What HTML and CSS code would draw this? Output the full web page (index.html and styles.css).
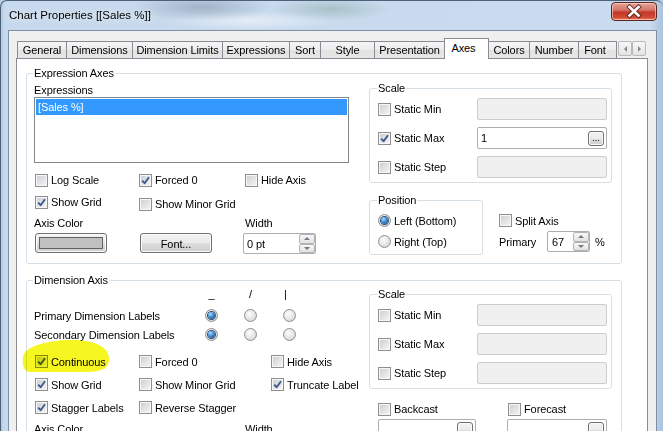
FILE: index.html
```html
<!DOCTYPE html>
<html lang="en">
<head>
<meta charset="utf-8">
<title>Chart Properties</title>
<link rel="stylesheet" href="styles.css">
</head>
<body>
<div class="window">
  <div class="titlebar">
    <span class="title">Chart Properties [[Sales %]]</span>
    <span class="close"><svg width="46" height="19" viewBox="0 0 46 19"><path class="x-shadow" d="M18.5 5L27.5 13.5M27.5 5L18.5 13.5"/><path class="x-mark" d="M18.5 5L27.5 13.5M27.5 5L18.5 13.5"/></svg></span>
  </div>
  <div class="client">
    <div class="tabs">
      <span class="tab t-general">General</span>
      <span class="tab t-dim">Dimensions</span>
      <span class="tab t-diml">Dimension Limits</span>
      <span class="tab t-expr">Expressions</span>
      <span class="tab t-sort">Sort</span>
      <span class="tab t-style">Style</span>
      <span class="tab t-pres">Presentation</span>
      <span class="tab t-axes active">Axes</span>
      <span class="tab t-colors">Colors</span>
      <span class="tab t-number">Number</span>
      <span class="tab t-font">Font</span>
      <span class="tab-arrows"><span class="arrow arrow-left"></span><span class="arrow arrow-right"></span></span>
    </div>
    <div class="panel">
      <fieldset class="group g-expr">
        <legend>Expression Axes</legend>
        <div class="cols">
          <div class="lcol">
            <div class="lbl-top">Expressions</div>
            <div class="listbox"><div class="lb-sel">[Sales %]</div></div>
            <div class="crow crow-a">
              <label class="chk w104"><span class="cb"></span>Log Scale</label>
              <label class="chk w106"><span class="cb on"><svg viewBox="0 0 11 11"><path d="M2.2 5.6L4.6 8.2L9 2.3"/></svg></span>Forced 0</label>
              <label class="chk"><span class="cb"></span>Hide Axis</label>
            </div>
            <div class="crow crow-b">
              <label class="chk w104"><span class="cb on"><svg viewBox="0 0 11 11"><path d="M2.2 5.6L4.6 8.2L9 2.3"/></svg></span>Show Grid</label>
              <label class="chk low"><span class="cb"></span>Show Minor Grid</label>
            </div>
            <div class="lrow">
              <span class="w211">Axis Color</span><span>Width</span>
            </div>
            <div class="brow">
              <span class="btn colorbtn"><span class="swatch"></span></span>
              <span class="btn fontbtn">Font...</span>
              <span class="field spinfield wfield">
                <span class="val">0 pt</span>
                <span class="spin"><span class="sb up"></span><span class="sb down"></span></span>
              </span>
            </div>
          </div>
          <div class="rcol">
            <fieldset class="group scale scale-a">
              <legend>Scale</legend>
              <div class="srow"><label class="chk w99"><span class="cb"></span>Static Min</label><span class="field dis sfield"></span></div>
              <div class="srow"><label class="chk w99"><span class="cb on"><svg viewBox="0 0 11 11"><path d="M2.2 5.6L4.6 8.2L9 2.3"/></svg></span>Static Max</label><span class="field sfield"><span class="val">1</span><span class="btn dots">...</span></span></div>
              <div class="srow"><label class="chk w99"><span class="cb"></span>Static Step</label><span class="field dis sfield"></span></div>
            </fieldset>
            <div class="posrow">
              <fieldset class="group pos">
                <legend>Position</legend>
                <label class="opt"><span class="rb on"></span>Left (Bottom)</label>
                <label class="opt"><span class="rb"></span>Right (Top)</label>
              </fieldset>
              <div class="split">
                <label class="chk h21"><span class="cb"></span>Split Axis</label>
                <div class="prim">
                  <span class="w48">Primary</span>
                  <span class="field spinfield pfield">
                    <span class="val">67</span>
                    <span class="spin"><span class="sb up"></span><span class="sb down"></span></span>
                  </span>
                  <span class="pct">%</span>
                </div>
              </div>
            </div>
          </div>
        </div>
      </fieldset>

      <fieldset class="group g-dim">
        <legend>Dimension Axis</legend>
        <div class="cols">
          <div class="lcol">
            <div class="hdr"><span class="hc">_</span><span class="hc hc2">/</span><span class="hc hc3">|</span></div>
            <div class="rrow rrow-first"><span class="rlabel">Primary Dimension Labels</span><span class="rb on"></span><span class="rb rb-gap"></span><span class="rb rb-gap"></span></div>
            <div class="rrow"><span class="rlabel">Secondary Dimension Labels</span><span class="rb on"></span><span class="rb rb-gap"></span><span class="rb rb-gap"></span></div>
            <div class="drow drow-first">
              <label class="chk w104"><span class="cb on"><svg viewBox="0 0 11 11"><path d="M2.2 5.6L4.6 8.2L9 2.3"/></svg></span>Continuous</label>
              <label class="chk w132"><span class="cb"></span>Forced 0</label>
              <label class="chk"><span class="cb"></span>Hide Axis</label>
            </div>
            <div class="drow">
              <label class="chk w104"><span class="cb on"><svg viewBox="0 0 11 11"><path d="M2.2 5.6L4.6 8.2L9 2.3"/></svg></span>Show Grid</label>
              <label class="chk w132"><span class="cb"></span>Show Minor Grid</label>
              <label class="chk"><span class="cb on"><svg viewBox="0 0 11 11"><path d="M2.2 5.6L4.6 8.2L9 2.3"/></svg></span>Truncate Label</label>
            </div>
            <div class="drow">
              <label class="chk w104"><span class="cb on"><svg viewBox="0 0 11 11"><path d="M2.2 5.6L4.6 8.2L9 2.3"/></svg></span>Stagger Labels</label>
              <label class="chk w132"><span class="cb"></span>Reverse Stagger</label>
            </div>
            <div class="lrow lrow-dim">
              <span class="w211">Axis Color</span><span>Width</span>
            </div>
          </div>
          <div class="rcol">
            <fieldset class="group scale scale-b">
              <legend>Scale</legend>
              <div class="srow"><label class="chk w99"><span class="cb"></span>Static Min</label><span class="field dis sfield"></span></div>
              <div class="srow"><label class="chk w99"><span class="cb"></span>Static Max</label><span class="field dis sfield"></span></div>
              <div class="srow"><label class="chk w99"><span class="cb"></span>Static Step</label><span class="field dis sfield"></span></div>
            </fieldset>
            <div class="castrow">
              <label class="chk w130"><span class="cb"></span>Backcast</label>
              <label class="chk"><span class="cb"></span>Forecast</label>
            </div>
            <div class="castfields">
              <span class="field cfield1"><span class="btn dots"></span></span>
              <span class="field cfield2"><span class="btn dots"></span></span>
            </div>
          </div>
        </div>
      </fieldset>
    </div>
  </div>
</div>
<svg class="highlight" width="663" height="431" viewBox="0 0 663 431"><path d="M23 357C24 346 50 339 76 340C97 341 110 348 109 360C108 370 100 372 82 372L31 372C24 372 22 366 23 357Z"/></svg>
</body>
</html>
```
FILE: styles.css
```css
* { box-sizing: border-box; }
html, body { margin: 0; padding: 0; }
body {
  position: relative;
  width: 663px;
  height: 431px;
  overflow: hidden;
  background: #b8cde4;
  font-family: "Liberation Sans", Arial, sans-serif;
  font-size: 11px;
  line-height: 14px;
  letter-spacing: -0.1px;
  color: #000;
}
.window {
  height: 431px;
  display: flex;
  flex-direction: column;
  border-left: 1px solid #4d6179;
  border-top: 1px solid #4d6179;
  border-radius: 7px 7px 0 0;
  background:
    radial-gradient(ellipse 70px 14px at 200px 6px, rgba(90,110,130,.35), rgba(90,110,130,0)),
    radial-gradient(ellipse 60px 12px at 330px 8px, rgba(80,120,90,.25), rgba(80,120,90,0)),
    radial-gradient(ellipse 90px 10px at 250px 20px, rgba(255,255,255,.5), rgba(255,255,255,0)),
    linear-gradient(90deg, #aec6df 0, #c7d9ed 3px, #c9dbee 98%, #aac3de 100%);
}
.titlebar {
  height: 29px;
  display: flex;
  justify-content: space-between;
  align-items: flex-start;
  flex: none;
}
.title {
  padding: 7px 0 0 8px;
  font-size: 11.5px;
  letter-spacing: 0;
  color: #000;
  text-shadow: 0 0 6px rgba(255,255,255,.9);
}
.close {
  margin: 1px 6px 0 0;
  width: 46px;
  height: 19px;
  border: 1px solid #5e2621;
  border-radius: 4px;
  background: linear-gradient(#e6a399 0, #d6776a 40%, #c2382a 55%, #d24b35 85%, #e38a6f 100%);
  box-shadow: inset 0 0 0 1px rgba(255,220,210,.6);
}
.close svg { display: block; margin: -1px 0 0 -1px; }
.x-shadow { stroke: #4a1d17; stroke-width: 4.6; stroke-linecap: square; fill: none; opacity: .75; }
.x-mark { stroke: #fff; stroke-width: 2.6; stroke-linecap: square; fill: none; }

.client {
  flex: 1;
  display: flex;
  flex-direction: column;
  margin: 0 6px 0 7px;
  border: 1px solid #7f90a5;
  border-bottom: none;
  background: #f0f0f0;
  padding: 7px 8px 0 7px;
}
.tabs {
  display: flex;
  align-items: flex-end;
  height: 20px;
  margin-left: 1px;
  flex: none;
}
.tab {
  height: 17px;
  margin-right: -1px;
  display: flex;
  align-items: center;
  justify-content: center;
  border: 1px solid #898c95;
  border-bottom: none;
  background: linear-gradient(#f5f5f5 0, #ededed 50%, #e2e2e2 51%, #e6e6e6 100%);
  white-space: nowrap;
  flex: none;
}
.tab.active {
  position: relative;
  z-index: 2;
  height: 21px;
  margin-bottom: -1px;
  padding: 0 6px 3px 0;
  background: #fff;
}
.t-general { width: 50px; }
.t-dim { width: 67px; }
.t-diml { width: 91px; }
.t-expr { width: 68px; }
.t-sort { width: 32px; }
.t-style { width: 55px; }
.t-pres { width: 71px; }
.t-axes { width: 45px; }
.t-colors { width: 42px; }
.t-number { width: 50px; }
.t-font { width: 39px; padding-right: 5px; }
.tab-arrows {
  display: flex;
  margin: 0 0 2px 2px;
}
.arrow {
  width: 14px;
  height: 15px;
  border: 1px solid #b9b9b9;
  border-radius: 2px;
  background: linear-gradient(#f7f7f7, #e4e4e4);
  display: flex;
  align-items: center;
  justify-content: center;
}
.arrow::after {
  content: "";
  width: 0;
  height: 0;
  border-top: 3px solid transparent;
  border-bottom: 3px solid transparent;
}
.arrow-left::after { border-right: 3px solid #8a8a8a; }
.arrow-right::after { border-left: 3px solid #8a8a8a; }

.panel {
  flex: 1;
  background: #fff;
  border: 1px solid #898c95;
  padding: 7px 0 0 9px;
}

/* group boxes */
.group {
  margin: 0;
  min-width: 0;
  border: 1px solid #d5dfe5;
  border-radius: 3px;
}
.group legend {
  padding: 0 1px;
  margin-left: -1px;
  line-height: 14px;
}
.g-expr { width: 596px; padding: 0 9px 8px 7px; }
.g-dim { width: 596px; margin-top: 9px; padding: 0 9px 20px 7px; }
.cols { display: flex; align-items: flex-start; }
.lcol { width: 335px; flex: none; }
.rcol { width: 243px; flex: none; }

/* expression axes left */
.lbl-top { margin-top: 3px; height: 14px; }
.listbox {
  width: 315px;
  height: 66px;
  border: 1px solid #828790;
  padding: 1px;
}
.lb-sel {
  height: 16px;
  line-height: 16px;
  padding-left: 2px;
  background: #3399ff;
  color: #fff;
}
.crow { display: flex; align-items: flex-start; height: 18px; margin-left: 1px; }
.crow .chk { height: 16px; }
.crow .chk.low { margin-top: 2px; }
.crow-a { margin-top: 9px; }
.crow-b { margin-top: 4px; }
.chk {
  display: flex;
  align-items: center;
  white-space: nowrap;
  flex: none;
}
.w104 { width: 104px; }
.w106 { width: 106px; }
.w132 { width: 132px; }
.w99 { width: 99px; }
.w130 { width: 130px; }
.w211 { width: 211px; display: inline-block; }
.w48 { width: 48px; flex: none; }
.lrow { margin-top: 4px; height: 14px; white-space: nowrap; }
.brow { display: flex; align-items: flex-start; margin-top: 3px; }

/* checkbox */
.cb {
  width: 13px;
  height: 13px;
  flex: none;
  margin-right: 3px;
  border: 1px solid #8e8f8f;
  background: linear-gradient(135deg, #c9ccd1 0%, #e3e4e6 55%, #f6f6f6 100%);
  box-shadow: inset 0 0 0 1px #f7f7f7;
  display: flex;
  align-items: center;
  justify-content: center;
}
.cb svg { width: 11px; height: 11px; display: block; }
.cb svg path { fill: none; stroke: #3d5890; stroke-width: 1.9; stroke-linejoin: round; }

/* radio */
.rb {
  width: 13px;
  height: 13px;
  flex: none;
  border-radius: 50%;
  border: 1px solid #8e8f8f;
  background: radial-gradient(circle at 40% 35%, #fdfdfd 0, #e8e8e8 45%, #cdcdcd 100%);
  display: flex;
  align-items: center;
  justify-content: center;
}
.rb.on::after {
  content: "";
  width: 7px;
  height: 7px;
  border-radius: 50%;
  background: radial-gradient(circle at 35% 30%, #a9dcff 0, #3f8dd0 45%, #163f6e 100%);
  box-shadow: 0 0 0 1px #2d4f78;
}

/* buttons */
.btn {
  display: flex;
  align-items: center;
  justify-content: center;
  border: 1px solid #707070;
  border-radius: 3px;
  background: linear-gradient(#f2f2f2 0, #ebebeb 50%, #dddddd 51%, #cfcfcf 100%);
  box-shadow: inset 0 0 0 1px #fbfbfb;
  flex: none;
}
.colorbtn { width: 72px; height: 20px; margin-left: 1px; padding: 3px; }
.swatch { display: block; width: 100%; height: 100%; background: #c0c0c0; border: 1px solid #616161; }
.fontbtn { width: 72px; height: 20px; margin-left: 33px; padding-top: 1px; }
.dots {
  width: 16px;
  height: 15px;
  margin-left: auto;
  margin-right: 2px;
  font-size: 9px;
  line-height: 9px;
  align-items: flex-end;
  padding-bottom: 2px;
}

/* fields */
.field {
  display: flex;
  align-items: center;
  height: 21px;
  border: 1px solid #abadb3;
  border-radius: 2px;
  background: #fff;
  flex: none;
}
.field.dis { background: #f0f0f0; border-color: #cdcdcd; }
.val { padding-left: 3px; }
.wfield { width: 73px; margin-left: 31px; }
.spin {
  margin-left: auto;
  display: flex;
  flex-direction: column;
  width: 16px;
  height: 19px;
}
.sb {
  flex: 1;
  border: 1px solid #b3b3b3;
  border-radius: 2px;
  background: linear-gradient(#f8f8f8, #e2e2e2);
  display: flex;
  align-items: center;
  justify-content: center;
}
.sb::after {
  content: "";
  width: 0;
  height: 0;
  border-left: 3px solid transparent;
  border-right: 3px solid transparent;
}
.sb.up::after { border-bottom: 3px solid #6f7a8a; }
.sb.down::after { border-top: 3px solid #6f7a8a; }

/* scale group */
.scale { width: 243px; padding: 3px 4px 4px 8px; }
.scale-a { margin-top: 1px; }
.srow { display: flex; align-items: center; height: 22px; margin-bottom: 7px; }
.srow:last-child { margin-bottom: 0; }
.sfield { width: 130px; height: 22px; }

/* position */
.posrow { display: flex; align-items: flex-start; margin-top: 10px; }
.pos { width: 114px; padding: 3px 0 2px 8px; flex: none; }
.opt { display: flex; align-items: center; height: 21px; white-space: nowrap; }
.opt .rb { margin-right: 3px; }
.split { margin: 17px 0 0 16px; }
.h21 { height: 21px; }
.prim { display: flex; align-items: center; height: 21px; white-space: nowrap; }
.pfield { width: 43px; }
.pfield .val { padding-left: 4px; }
.pct { margin-left: 5px; }

/* dimension axis */
.hdr { display: flex; height: 14px; padding-left: 171px; }
.hc { width: 13px; text-align: center; flex: none; }
.hc2 { margin-left: 26px; }
.hc3 { margin-left: 22px; }
.rrow { display: flex; align-items: center; height: 19px; }
.rrow-first { margin-top: 5px; }
.rlabel { width: 171px; flex: none; white-space: nowrap; }
.rb-gap { margin-left: 26px; }
.drow { display: flex; height: 23px; margin-left: 1px; }
.drow-first { margin-top: 6px; }
.lrow-dim { margin-top: 3px; }
.castrow { display: flex; height: 18px; margin-top: 11px; padding-left: 9px; }
.castfields { display: flex; margin-top: 1px; padding-left: 9px; }
.cfield1 { width: 98px; height: 22px; align-items: flex-start; padding-top: 2px; }
.cfield2 { width: 100px; height: 22px; margin-left: 31px; align-items: flex-start; padding-top: 2px; }

/* highlighter mark */
.highlight {
  position: absolute;
  left: 0;
  top: 0;
  pointer-events: none;
  mix-blend-mode: multiply;
}
.highlight path { fill: #f6f620; }
```
